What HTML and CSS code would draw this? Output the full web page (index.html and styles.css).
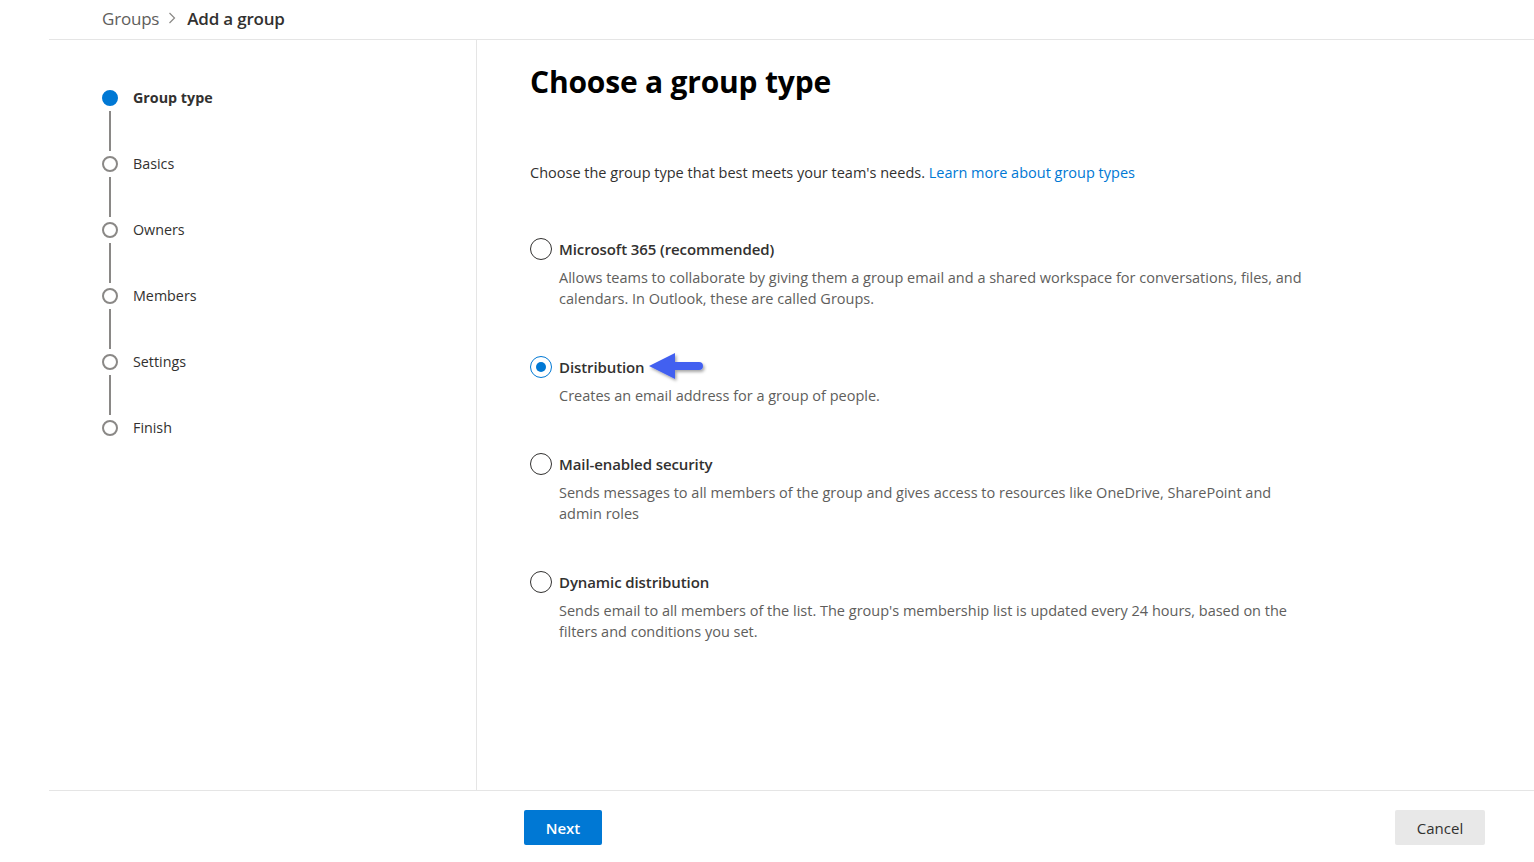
FILE: index.html
```html
<!DOCTYPE html>
<html lang="en">
<head>
<meta charset="utf-8">
<title>Add a group</title>
<link rel="stylesheet" href="styles.css">
</head>
<body>
<div class="page">
  <header class="header">
    <nav class="breadcrumb">
      <span class="crumb">Groups</span>
      <svg class="chev" width="8" height="12" viewBox="0 0 8 12"><path d="M1.5 1 L6.5 6 L1.5 11" fill="none" stroke="#8a8886" stroke-width="1.2"/></svg>
      <span class="crumb current">Add a group</span>
    </nav>
  </header>
  <div class="body">
    <aside class="nav">
      <ol class="steps">
        <li class="step active"><span class="dot"></span><span class="step-label">Group type</span></li>
        <li class="connector"></li>
        <li class="step"><span class="dot"></span><span class="step-label">Basics</span></li>
        <li class="connector"></li>
        <li class="step"><span class="dot"></span><span class="step-label">Owners</span></li>
        <li class="connector"></li>
        <li class="step"><span class="dot"></span><span class="step-label">Members</span></li>
        <li class="connector"></li>
        <li class="step"><span class="dot"></span><span class="step-label">Settings</span></li>
        <li class="connector"></li>
        <li class="step"><span class="dot"></span><span class="step-label">Finish</span></li>
      </ol>
    </aside>
    <main class="main">
      <h1 class="title">Choose a group type</h1>
      <p class="intro">Choose the group type that best meets your team's needs. <a class="link" href="#">Learn more about group types</a></p>
      <div class="options">
        <div class="option">
          <div class="opt-head"><span class="radio"></span><span class="opt-label">Microsoft 365 (recommended)</span></div>
          <p class="opt-desc">Allows teams to collaborate by giving them a group email and a shared workspace for conversations, files, and calendars. In Outlook, these are called Groups.</p>
        </div>
        <div class="option">
          <div class="opt-head"><span class="radio checked"></span><span class="opt-label">Distribution</span>
            <svg class="arrow" width="60" height="34" viewBox="0 0 60 34">
              <defs><filter id="sh" x="-20%" y="-30%" width="150%" height="170%"><feDropShadow dx="1.5" dy="2" stdDeviation="1.5" flood-color="#000" flood-opacity="0.35"/></filter></defs>
              <g filter="url(#sh)"><path d="M2 15 L28 2 L28 11 L52 11 A4 4 0 0 1 52 19 L28 19 L28 28 Z" fill="#4361f0"/></g>
            </svg>
          </div>
          <p class="opt-desc">Creates an email address for a group of people.</p>
        </div>
        <div class="option">
          <div class="opt-head"><span class="radio"></span><span class="opt-label">Mail-enabled security</span></div>
          <p class="opt-desc">Sends messages to all members of the group and gives access to resources like OneDrive, SharePoint and admin roles</p>
        </div>
        <div class="option">
          <div class="opt-head"><span class="radio"></span><span class="opt-label">Dynamic distribution</span></div>
          <p class="opt-desc">Sends email to all members of the list. The group's membership list is updated every 24 hours, based on the filters and conditions you set.</p>
        </div>
      </div>
    </main>
  </div>
  <footer class="footer">
    <button class="btn primary">Next</button>
    <button class="btn secondary">Cancel</button>
  </footer>
</div>
</body>
</html>
```

FILE: styles.css
```css
* { box-sizing: border-box; }
html, body { margin: 0; padding: 0; background: #fff; }
body {
  font-family: "Open Sans", "Noto Sans", "Liberation Sans", sans-serif;
  color: #323130;
  width: 1534px;
  height: 862px;
  overflow: hidden;
}
.page { margin-left: 49px; display: flex; flex-direction: column; height: 862px; }
.header {
  height: 40px;
  border-bottom: 1px solid #e5e5e5;
  padding-left: 53px;
  display: flex;
  align-items: center;
}
.breadcrumb { display: flex; align-items: center; gap: 7px; margin-top: -3px; }
.crumb { font-size: 17px; color: #605e5c; }
.crumb:first-child { letter-spacing: -0.2px; }
.crumb.current { color: #323130; font-weight: 600; letter-spacing: -0.2px; }
.chev { margin: 0 4px 0 2px; }
.body { display: flex; height: 750px; }
.nav {
  width: 428px;
  border-right: 1px solid #e5e5e5;
  padding: 50px 0 0 53px;
}
.steps { list-style: none; margin: 0; padding: 0; }
.step { display: flex; align-items: center; gap: 15px; height: 16px; }
.dot {
  width: 16px; height: 16px; border-radius: 50%;
  border: 2px solid #8a8886;
  flex: none;
}
.step.active .dot { background: #0078d4; border-color: #0078d4; }
.step-label { font-size: 14.3px; color: #323130; line-height: 16px; }
.step.active .step-label { font-weight: 700; }
.connector {
  width: 2px; height: 40px; background: #8a8886;
  margin: 5px 0 5px 7px;
}
.main { flex: 1; padding: 0 0 0 53px; }
.title {
  font-size: 30px; font-weight: 700; color: #000;
  margin: 22px 0 0 0; line-height: 40px;
  letter-spacing: -0.2px;
}
.intro { font-size: 14.5px; margin: 61px 0 0 0; line-height: 20px; color: #323130; }
.link { color: #0078d4; text-decoration: none; }
.options { margin-top: 55px; display: flex; flex-direction: column; gap: 47px; }
.opt-head { display: flex; align-items: center; height: 22px; position: relative; }
.radio {
  width: 22px; height: 22px; border-radius: 50%;
  border: 1px solid #323130; flex: none; margin-right: 7px;
  display: flex; align-items: center; justify-content: center;
}
.radio.checked { border-color: #0078d4; }
.radio.checked::after {
  content: ""; width: 10px; height: 10px; border-radius: 50%; background: #0078d4;
}
.opt-label { font-size: 15px; font-weight: 600; color: #323130; letter-spacing: -0.1px; }
.arrow { margin-left: 2px; margin-top: 2px; }
.opt-desc {
  margin: 7px 0 0 29px; font-size: 14.5px; line-height: 21px; color: #605e5c;
  max-width: 752px;
}
.footer {
  height: 72px;
  border-top: 1px solid #e5e5e5;
  display: flex; align-items: flex-start; justify-content: space-between;
  padding: 19px 49px 0 475px;
}
.btn {
  height: 35px; border-radius: 2px; border: none; font-family: inherit;
  font-size: 15px; font-weight: 600; cursor: pointer;
}
.btn.primary { background: #0078d4; color: #fff; width: 78px; }
.btn.secondary { background: #e8e8e8; color: #323130; width: 90px; font-weight: 400; }
```
